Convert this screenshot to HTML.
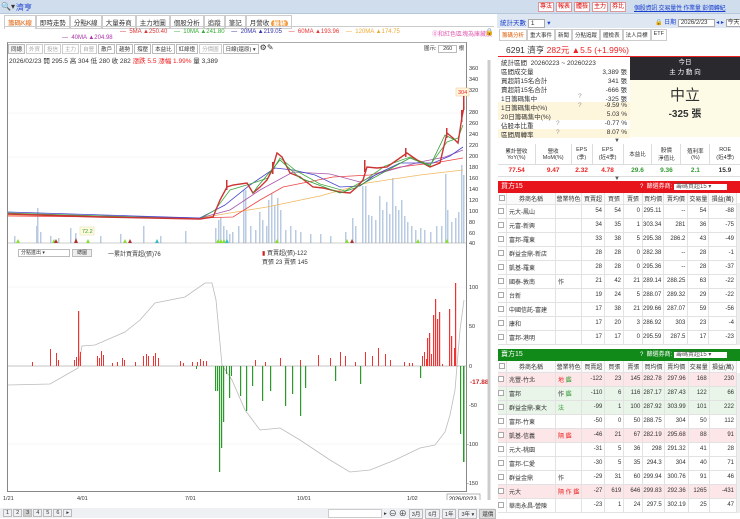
<!DOCTYPE html>
<html><head><meta charset="utf-8"><style>
*{margin:0;padding:0;box-sizing:border-box}
body{width:740px;height:518px;overflow:hidden;background:#fff;font-family:"Liberation Sans","Noto Sans CJK TC",sans-serif;font-size:6.5px;color:#333;position:relative}
.a{position:absolute;white-space:nowrap}
table{border-collapse:collapse}
.t td{border-right:1px solid #e2e2e2;border-bottom:1px solid #e2e2e2;height:14px;font-size:6px;text-align:right;padding-right:2px}
.t tr.h td{height:11px;text-align:center;padding:0;background:#fafafa}
.t td.n{text-align:left;padding-left:2px}
.cb{display:inline-block;width:6px;height:6px;border:1px solid #aaa;background:#fff;vertical-align:middle}
.pink td{background:#fde6e8}.grn td{background:#e8f5e8}
.rb{border:1px solid #d99;background:#fff;color:#d00;padding:0 1px;font-size:6px;line-height:8px}
.rt span{flex-shrink:0;white-space:nowrap;border:1px solid #ccc;padding:1px 2px}
</style></head><body>
<div class="a" style="left:0;top:0;width:740px;height:14px;background:#cfdded;border-bottom:1px solid #b8c8dc"></div>
<div class="a" style="left:1px;top:2px;font-size:8px">🔍▾</div>
<div class="a" style="left:16px;top:2px;font-size:8px;color:#1a3fd0">濟亨</div>
<div class="a" style="left:538px;top:2px;display:flex;gap:2px">
<span class="rb">專法</span><span class="rb">報表</span><span class="rb">體檢</span><span class="rb">主力</span><span class="rb">券比</span></div>
<div class="a" style="left:634px;top:3px;color:#1a3fd0;font-size:6px;text-decoration:underline;letter-spacing:-0.2px">個股資訊 交易量性 作業量 彭價轉紀</div>
<div class="a" style="left:4px;top:15px;display:flex;font-size:6.5px">
<span style="padding:1px 3px;color:#e05a00;border:1px solid #ccc;border-bottom:none">籌碼K線</span><span style="padding:1px 3px;border:1px solid #ccc">即時走勢</span><span style="padding:1px 3px;border:1px solid #ccc">分點K線</span><span style="padding:1px 3px;border:1px solid #ccc">大量券商</span><span style="padding:1px 3px;border:1px solid #ccc">主力地圖</span><span style="padding:1px 3px;border:1px solid #ccc">個股分析</span><span style="padding:1px 3px;border:1px solid #ccc">追蹤</span><span style="padding:1px 3px;border:1px solid #ccc">筆記</span><span style="padding:1px 3px;border:1px solid #ccc">月營收 <b style="background:#f39a3a;color:#fff;border-radius:4px;padding:0 2px">最新</b></span></div>
<div class="a" style="left:4px;top:26px;width:490px;border-top:1px solid #ccc"></div>
<div class="a" style="left:120px;top:29px;font-size:6px"><span style="color:#d33">— &nbsp;5MA ▲250.40</span>&nbsp;&nbsp;&nbsp;&nbsp;<span style="color:#3a3">— &nbsp;10MA ▲241.80</span>&nbsp;&nbsp;&nbsp;&nbsp;<span style="color:#33a">— &nbsp;20MA ▲219.05</span>&nbsp;&nbsp;&nbsp;&nbsp;<span style="color:#e33">— &nbsp;60MA ▲193.96</span>&nbsp;&nbsp;&nbsp;&nbsp;<span style="color:#ea3">— &nbsp;120MA ▲174.75</span></div>
<div class="a" style="left:62px;top:35px;font-size:6px;color:#a3a">— &nbsp;40MA ▲204.98</div>
<div class="a" style="left:432px;top:29px;font-size:6px;color:#e05ab0">⓪和紅色區塊為庫藏股</div>
<div class="a" style="left:485px;top:28px;font-size:7px">🔒</div>
<div class="a" style="left:7px;top:42px;width:460px;height:450px;border:1px solid #888;border-top:1px solid #aaa"></div>
<div class="a" style="left:8px;top:44px;display:flex;gap:1px;font-size:5.5px">
<span style="border:1px solid #bbb;padding:0 2px;background:#f5f5f5">同總</span><span style="border:1px solid #ccc;padding:0 2px;color:#aaa">外資</span><span style="border:1px solid #ccc;padding:0 2px;color:#aaa">投信</span><span style="border:1px solid #ccc;padding:0 2px;color:#aaa">主力</span><span style="border:1px solid #ccc;padding:0 2px;color:#aaa">自營</span><span style="border:1px solid #bbb;padding:0 2px">散戶</span><span style="border:1px solid #bbb;padding:0 2px">趨勢</span><span style="border:1px solid #bbb;padding:0 2px">撐壓</span><span style="border:1px solid #bbb;padding:0 2px">本益比</span><span style="border:1px solid #bbb;padding:0 2px">紅綠燈</span><span style="border:1px solid #ccc;padding:0 2px;color:#aaa">分價圖</span><span style="border:1px solid #bbb;padding:0 2px;width:36px">日線(還原) ▾</span><span style="font-size:8px;line-height:7px">⚙✎</span></div>
<div class="a" style="left:424px;top:44px;font-size:5.5px">圖示: <span style="border:1px solid #bbb;padding:0 4px">260</span> 根</div>
<div class="a" style="left:9px;top:55px;font-size:6.5px">2026/02/23 開 295.5 高 304 低 280 收 282 <span style="color:#e22">漲跌 5.5 漲幅 1.99%</span> 量 3,389</div>
<svg class="a" style="left:0;top:60px" width="496" height="440" viewBox="0 60 496 440">
<g fill="#333" font-size="5.5" font-family="Liberation Sans">
<text x="469" y="70">360</text><text x="469" y="81">340</text><text x="469" y="92">320</text><text x="469" y="114">280</text><text x="469" y="125">260</text><text x="469" y="136">240</text><text x="469" y="147">220</text><text x="469" y="158">200</text><text x="469" y="169">180</text><text x="469" y="180">160</text><text x="469" y="191">140</text><text x="469" y="202">120</text><text x="469" y="213">100</text><text x="469" y="224">80</text><text x="469" y="235">60</text><text x="469" y="245">40</text>
<text x="469" y="289">100</text><text x="469" y="328">50</text><text x="469" y="368">0</text><text x="469" y="407">-50</text><text x="467" y="446">-100</text><text x="467" y="485">-150</text>
</g>
<rect x="456" y="88" width="13" height="8" fill="#fff6e0" stroke="#f0c890" stroke-width=".5"/><text x="458" y="94" font-size="5.5" fill="#e22">304</text>
<text x="470" y="384" font-size="6.5" fill="#c22" font-weight="bold">-17.88</text>
<g stroke="#eee" stroke-width=".5"><line x1="8" y1="113" x2="466" y2="113"/><line x1="8" y1="157" x2="466" y2="157"/><line x1="8" y1="287" x2="466" y2="287"/><line x1="8" y1="444" x2="466" y2="444"/></g>
<g fill="#b9cbe2">
<rect x="14" y="236" width="1.5" height="7"/><rect x="36" y="226" width="1.5" height="17"/><rect x="37" y="208" width="1.5" height="35"/><rect x="40" y="232" width="1.5" height="11"/><rect x="50" y="236" width="1.5" height="7"/><rect x="58" y="238" width="1.5" height="5"/><rect x="70" y="228" width="1.5" height="15"/><rect x="75" y="233" width="1.5" height="10"/><rect x="100" y="236" width="1.5" height="7"/><rect x="120" y="234" width="1.5" height="9"/><rect x="143" y="226" width="1.5" height="17"/><rect x="160" y="236" width="1.5" height="7"/><rect x="185" y="231" width="1.5" height="12"/>
<rect x="215" y="228" width="1.5" height="15"/><rect x="218" y="220" width="1.5" height="23"/><rect x="220" y="218" width="1.5" height="25"/><rect x="223" y="226" width="1.5" height="17"/><rect x="226" y="230" width="1.5" height="13"/><rect x="229" y="234" width="1.5" height="9"/><rect x="232" y="232" width="1.5" height="11"/><rect x="238" y="226" width="1.5" height="17"/><rect x="243" y="190" width="1.5" height="53"/><rect x="245" y="190" width="1.5" height="53"/><rect x="250" y="226" width="1.5" height="17"/><rect x="255" y="230" width="1.5" height="13"/><rect x="259" y="212" width="1.5" height="31"/><rect x="262" y="220" width="1.5" height="23"/><rect x="266" y="226" width="1.5" height="17"/><rect x="268" y="200" width="1.5" height="43"/><rect x="271" y="193" width="1.5" height="50"/><rect x="274" y="205" width="1.5" height="38"/><rect x="277" y="198" width="1.5" height="45"/><rect x="280" y="210" width="1.5" height="33"/><rect x="285" y="230" width="1.5" height="13"/><rect x="290" y="226" width="1.5" height="17"/><rect x="295" y="230" width="1.5" height="13"/><rect x="300" y="232" width="1.5" height="11"/><rect x="310" y="234" width="1.5" height="9"/><rect x="320" y="234" width="1.5" height="9"/><rect x="330" y="236" width="1.5" height="7"/><rect x="345" y="232" width="1.5" height="11"/><rect x="352" y="218" width="1.5" height="25"/><rect x="355" y="226" width="1.5" height="17"/>
<rect x="362" y="186" width="1.5" height="57"/><rect x="365" y="186" width="1.5" height="57"/><rect x="368" y="215" width="1.5" height="28"/><rect x="371" y="216" width="1.5" height="27"/><rect x="375" y="220" width="1.5" height="23"/><rect x="379" y="196" width="1.5" height="47"/><rect x="382" y="210" width="1.5" height="33"/><rect x="386" y="202" width="1.5" height="41"/><rect x="389" y="214" width="1.5" height="29"/><rect x="392" y="178" width="1.5" height="65"/><rect x="395" y="206" width="1.5" height="37"/><rect x="398" y="210" width="1.5" height="33"/><rect x="401" y="200" width="1.5" height="43"/><rect x="404" y="216" width="1.5" height="27"/><rect x="407" y="222" width="1.5" height="21"/><rect x="411" y="226" width="1.5" height="17"/><rect x="415" y="230" width="1.5" height="13"/><rect x="420" y="228" width="1.5" height="15"/><rect x="424" y="230" width="1.5" height="13"/><rect x="430" y="232" width="1.5" height="11"/><rect x="436" y="226" width="1.5" height="17"/><rect x="441" y="226" width="1.5" height="17"/><rect x="445" y="174" width="1.5" height="69"/><rect x="447" y="210" width="1.5" height="33"/><rect x="451" y="222" width="1.5" height="21"/><rect x="455" y="218" width="1.5" height="25"/><rect x="458" y="212" width="1.5" height="31"/><rect x="461" y="165" width="1.5" height="78"/><rect x="463" y="175" width="1.5" height="68"/>
</g>
<line x1="8" y1="243" x2="466" y2="243" stroke="#999" stroke-width=".5"/>
<polyline fill="none" stroke="#f0b860" stroke-width=".8" points="8,215 200,218 230,213 267,207 320,196 367,183 420,175 463,170"/>
<polyline fill="none" stroke="#e44" stroke-width=".8" points="8,216 200,218 233,217 260,200 283,187 333,177 370,175 400,167 440,162 463,158"/>
<polyline fill="none" stroke="#a5a" stroke-width=".8" points="8,214 200,218 230,210 260,190 293,172 330,174 360,182 380,173 420,162 445,157 463,150"/>
<polyline fill="none" stroke="#44c" stroke-width=".8" points="8,212 200,218 225,205 250,185 275,168 293,170 315,175 340,187 360,186 375,175 400,163 433,163 450,156 463,147"/>
<polyline fill="none" stroke="#4a4" stroke-width=".8" points="8,213 200,219 215,210 230,190 250,184 268,178 280,158 295,170 320,184 345,191 365,180 385,166 410,157 430,165 447,142 458,138 463,125"/>
<polyline fill="none" stroke="#c33" stroke-width="1.4" points="8,214 100,217 200,219 213,217 220,200 227,187 233,185 247,183 253,193 260,187 267,180 272,170 277,153 282,157 290,173 300,177 313,187 323,188 340,192 350,193 357,187 363,180 367,167 377,168 387,167 397,160 407,153 417,160 430,167 440,163 447,133 453,138 458,143 462,117 464,107"/>
<polyline fill="none" stroke="#393" stroke-width=".8" points="253,193 258,186 280,160 300,178 340,193 355,188 410,158 430,166 445,135 455,140"/>
<g fill="#c33"><rect x="226" y="180" width="1.5" height="10"/><rect x="272" y="162" width="1.5" height="12"/><rect x="364" y="160" width="1.5" height="12"/><rect x="405" y="148" width="1.5" height="9"/><rect x="446" y="128" width="1.5" height="10"/><rect x="461" y="110" width="1.5" height="12"/><rect x="463" y="96" width="1.5" height="14"/></g>
<g fill="#8d3"><path d="M16,243l2,-4 2,4z M52,243l2,-4 2,4z M86,243l2,-4 2,4z M123,243l2,-4 2,4z M216,243l2,-4 2,4z M219,243l2,-4 2,4z M222,243l2,-4 2,4z M275,243l2,-4 2,4z M345,243l2,-4 2,4z M416,243l2,-4 2,4z M445,243l2,-4 2,4z"/></g>
<g fill="#a33"><path d="M54,243l2,-4 2,4z M74,243l2,-5 2,5z M128,243l2,-4 2,4z M350,243l2,-4 2,4z"/></g>
<g fill="#3bc"><path d="M155,243l2,-4 2,4z M225,243l2,-4 2,4z"/></g>
<rect x="80" y="227" width="14" height="8" fill="#fffbe0" stroke="#dda" stroke-width=".5"/><text x="82" y="233" font-size="5.5" fill="#393">72.2</text>
<polyline fill="none" stroke="#bbb" stroke-width=".8" points="8,385 50,384 78,368 82,346 95,345 125,332 140,320 155,303 185,297 205,283 212,283 216,300 222,365 232,380 245,410 260,430 280,428 300,440 330,460 350,472 370,470 395,460 420,448 435,445 445,432 450,415 455,390 460,330 464,300"/>
<line x1="8" y1="366" x2="466" y2="366" stroke="#888" stroke-width=".5"/>
<g fill="#e33">
<rect x="32" y="362" width="1" height="4"/><rect x="50" y="349" width="1" height="17"/><rect x="56" y="353" width="1" height="13"/><rect x="58" y="360" width="1" height="6"/><rect x="74" y="360" width="1" height="6"/><rect x="76" y="357" width="1" height="9"/><rect x="78" y="311" width="1.2" height="55"/><rect x="80" y="352" width="1" height="14"/><rect x="97" y="356" width="1" height="10"/><rect x="99" y="358" width="1" height="8"/><rect x="101" y="351" width="1" height="15"/><rect x="103" y="355" width="1" height="11"/><rect x="112" y="363" width="1" height="3"/><rect x="117" y="362" width="1" height="4"/><rect x="122" y="358" width="1" height="8"/><rect x="124" y="360" width="1" height="6"/><rect x="135" y="362" width="1" height="4"/><rect x="143" y="356" width="1" height="10"/><rect x="146" y="354" width="1" height="12"/><rect x="148" y="356" width="1" height="10"/><rect x="153" y="356" width="1" height="10"/><rect x="155" y="353" width="1" height="13"/><rect x="158" y="358" width="1" height="8"/><rect x="180" y="361" width="1" height="5"/><rect x="183" y="363" width="1" height="3"/><rect x="192" y="362" width="1" height="4"/><rect x="197" y="362" width="1" height="4"/><rect x="200" y="359" width="1" height="7"/><rect x="203" y="361" width="1" height="5"/><rect x="206" y="361" width="1" height="5"/>
<rect x="255" y="360" width="1" height="6"/><rect x="265" y="362" width="1" height="4"/><rect x="280" y="358" width="1" height="8"/><rect x="300" y="360" width="1" height="6"/><rect x="318" y="355" width="1" height="11"/><rect x="330" y="358" width="1" height="8"/><rect x="340" y="352" width="1" height="14"/><rect x="345" y="356" width="1" height="10"/><rect x="355" y="362" width="1" height="4"/><rect x="365" y="352" width="1" height="14"/><rect x="372" y="356" width="1" height="10"/><rect x="378" y="348" width="1" height="18"/><rect x="385" y="354" width="1" height="12"/><rect x="390" y="360" width="1" height="6"/>
<rect x="404" y="362" width="1" height="4"/><rect x="409" y="363" width="1" height="3"/><rect x="412" y="363" width="1" height="3"/><rect x="422" y="356" width="1" height="10"/><rect x="424" y="352" width="1" height="14"/><rect x="426" y="359" width="1" height="7"/><rect x="427" y="338" width="1.2" height="28"/><rect x="429" y="333" width="1.2" height="33"/><rect x="431" y="354" width="1" height="12"/><rect x="433" y="315" width="1.2" height="51"/><rect x="435" y="299" width="1.2" height="67"/><rect x="437" y="319" width="1.2" height="47"/><rect x="439" y="312" width="1.2" height="54"/><rect x="442" y="364" width="1" height="2"/><rect x="449" y="309" width="1.2" height="57"/><rect x="451" y="336" width="1.2" height="30"/><rect x="454" y="348" width="1.2" height="18"/><rect x="455" y="283" width="1.2" height="83"/>
</g>
<g fill="#2a9a2a">
<rect x="215" y="366" width="1.2" height="25"/><rect x="217" y="366" width="1.2" height="25"/><rect x="219" y="366" width="1.2" height="106"/><rect x="221" y="366" width="1.2" height="82"/><rect x="223" y="366" width="1.2" height="56"/><rect x="226" y="366" width="1" height="8"/><rect x="229" y="366" width="1.2" height="32"/><rect x="231" y="366" width="1" height="10"/><rect x="196" y="366" width="1" height="3"/>
<rect x="240" y="366" width="1.2" height="30"/><rect x="246" y="366" width="1.2" height="45"/><rect x="252" y="366" width="1.2" height="20"/><rect x="262" y="366" width="1.2" height="35"/><rect x="270" y="366" width="1.2" height="25"/><rect x="285" y="366" width="1.2" height="40"/><rect x="292" y="366" width="1.2" height="28"/><rect x="300" y="366" width="1.2" height="50"/><rect x="305" y="366" width="1.2" height="22"/><rect x="335" y="366" width="1.2" height="15"/><rect x="360" y="366" width="1.2" height="18"/><rect x="420" y="366" width="1.2" height="12"/>
<rect x="460" y="366" width="1.2" height="68"/><rect x="463" y="366" width="1.5" height="96"/>
</g>
<g font-size="5.5" fill="#333"><text x="3" y="500">1/21</text><text x="3" y="506">2025</text><text x="77" y="500">4/01</text><text x="185" y="500">7/01</text><text x="297" y="500">10/01</text><text x="407" y="500">1/02</text><text x="407" y="506">2026</text></g>
<rect x="447" y="494" width="33" height="9" fill="#fff" stroke="#888" stroke-width=".6"/><text x="449" y="500.5" font-size="5.5">2026/02/23</text>
<line x1="489" y1="42" x2="489" y2="508" stroke="#ccc" stroke-width="3"/>
</svg>
<div class="a" style="left:18px;top:249px;width:52px;height:8px;border:1px solid #bbb;font-size:5px;line-height:6px;padding-left:2px">分點進出 ▾</div>
<div class="a" style="left:72px;top:249px;width:20px;height:8px;border:1px solid #bbb;background:#eee;font-size:5px;line-height:6px;text-align:center">總圖</div>
<div class="a" style="left:108px;top:249px;font-size:6px">一累計買賣超(張)76</div>
<div class="a" style="left:262px;top:248px;font-size:6px"><span style="color:#c22">▮</span> 買賣超(張)-122<br>買張 23 賣張 145</div>
<div class="a" style="left:0;top:508px;width:495px;height:10px;background:#eef0f3"></div>
<div class="a" style="left:3px;top:509px;display:flex;gap:1px;font-size:5.5px"><span style="border:1px solid #bbb;padding:0 2px">1</span><span style="border:1px solid #bbb;padding:0 2px">2</span><span style="border:1px solid #bbb;padding:0 2px;background:#ccc">3</span><span style="border:1px solid #bbb;padding:0 2px">4</span><span style="border:1px solid #bbb;padding:0 2px">5</span><span style="border:1px solid #bbb;padding:0 2px">6</span><span style="border:1px solid #bbb;padding:0 2px">▸</span></div>
<div class="a" style="left:328px;top:509px;width:54px;height:9px;background:#fff;border:1px solid #ccc"></div>
<div class="a" style="left:384px;top:508px;display:flex;gap:2px;font-size:5.5px;align-items:center"><span>▸</span><span style="font-size:8px">⊖</span><span style="font-size:8px">⊕</span><span style="border:1px solid #bbb;padding:0 2px">3月</span><span style="border:1px solid #bbb;padding:0 2px">6月</span><span style="border:1px solid #bbb;padding:0 2px">1年</span><span style="border:1px solid #bbb;padding:0 2px">3年 ▾</span><span style="border:1px solid #bbb;padding:0 2px;background:#ddd">還價</span></div>

<div class="a" style="left:497px;top:14px;width:243px;height:14px;background:#dfe8f2"></div>
<div class="a" style="left:500px;top:17px;font-size:6.5px;color:#1a3fd0">統計天數 <span style="border:1px solid #aaa;background:#fff;color:#333;padding:0 10px 0 2px">1</span> ▾</div>
<div class="a" style="left:655px;top:17px;font-size:6px;color:#1a3fd0">🔒 日期 <span style="border:1px solid #aaa;background:#fff;color:#333;padding:0 6px 0 2px">2026/2/23</span> ◂ ▸ <span style="border:1px solid #aaa;background:#fff;color:#333;padding:0 1px">今天</span></div>
<div class="a rt" style="left:499px;top:29px;width:240px;display:flex;font-size:5.5px"><span style="color:#e05a00">籌碼分析</span><span>重大事件</span><span>新聞</span><span>分點追蹤</span><span>體檢表</span><span>法人目標</span><span>ETF</span></div>
<div class="a" style="left:506px;top:44px;font-size:8.5px">6291 濟亨 <span style="color:#e22">282元 ▲5.5 (+1.99%)</span></div>
<div class="a" style="left:498px;top:56px;width:242px;height:1px;background:#e22"></div>
<div class="a" style="left:630px;top:57px;width:110px;height:23px;background:#2a2a2e;color:#fff;text-align:center;font-size:6.5px;line-height:10px;padding-top:1px">今日<br>主 力 動 向</div>
<div class="a" style="left:630px;top:80px;width:110px;height:57px;background:#fdfbe6;text-align:center"><div style="font-size:15px;margin-top:4px">中立</div><div style="font-size:10px;font-weight:bold">-325 張</div></div>
<div class="a" style="left:498px;top:57px;width:132px;font-size:6.5px">
<div style="height:9px;padding-left:3px">統計區間 &nbsp;20260223 ~ 20260223</div>
<div style="height:9px;padding-left:3px;position:relative">區間成交量<span style="position:absolute;right:3px">3,389 張</span></div>
<div style="height:9px;padding-left:3px;position:relative">買超前15名合計<span style="position:absolute;right:3px">341 張</span></div>
<div style="height:9px;padding-left:3px;position:relative">賣超前15名合計<span style="position:absolute;right:3px">-666 張</span></div>
<div style="height:9px;padding-left:3px;position:relative">1日籌碼集中<span style="position:absolute;left:80px;color:#999">?</span><span style="position:absolute;right:3px">-325 張</span></div>
<div style="height:9px;padding-left:3px;position:relative;background:#fdf5dc">1日籌碼集中(%)<span style="position:absolute;left:80px;color:#999">?</span><span style="position:absolute;right:3px">-9.59 %</span></div>
<div style="height:9px;padding-left:3px;position:relative;background:#fdf5dc">20日籌碼集中(%)<span style="position:absolute;right:3px">5.03 %</span></div>
<div style="height:9px;padding-left:3px;position:relative">佔股本比重<span style="position:absolute;left:58px;color:#999">?</span><span style="position:absolute;right:3px">-0.77 %</span></div>
<div style="height:9px;padding-left:3px;position:relative;background:#fdf5dc">區間周轉率<span style="position:absolute;left:58px;color:#999">?</span><span style="position:absolute;right:3px">8.07 %</span></div>
</div>
<div class="a" style="left:614px;top:138px;font-size:6px;color:#555">▼</div>
<table class="a" style="left:498px;top:144px;width:242px;font-size:5.5px;text-align:center">
<tr style="height:20px;border-bottom:1px solid #ddd"><td style="border-right:1px solid #ddd">累計營收<br>YoY(%)</td><td style="border-right:1px solid #ddd">營收<br>MoM(%)</td><td style="border-right:1px solid #ddd">EPS<br>(季)</td><td style="border-right:1px solid #ddd">EPS<br>(近4季)</td><td style="border-right:1px solid #ddd">本益比</td><td style="border-right:1px solid #ddd">股價<br>淨值比</td><td style="border-right:1px solid #ddd">殖利率<br>(%)</td><td>ROE<br>(近4季)</td></tr>
<tr style="height:12px;font-weight:bold;font-size:6.5px;border-bottom:1px solid #ddd"><td style="color:#e22">77.54</td><td style="color:#e22">9.47</td><td style="color:#e22">2.32</td><td style="color:#e22">4.78</td><td style="color:#393">29.6</td><td style="color:#393">9.36</td><td style="color:#393">2.1</td><td>15.9</td></tr></table>
<div class="a" style="left:614px;top:176px;font-size:6px;color:#555">▼</div>
<div class="a" style="left:498px;top:181px;width:242px;height:12px;background:#e8141c;color:#fff;font-size:7px;line-height:12px;padding-left:3px">買方15<span style="position:absolute;left:142px;font-size:6px">? &nbsp;篩選券商: <span style="background:#fff;color:#555;padding:0 16px 0 2px">籌碼買超15 ▾</span></span></div>
<table class="a t" style="left:498px;top:193px;width:239px">
<tr class="h"><td style="width:8px"><span class="cb"></span></td><td style="width:49px">券商名稱</td><td style="width:26px">營業特色</td><td style="width:23px">買賣超</td><td style="width:19px">買張</td><td style="width:19px">賣張</td><td style="width:20px">買均價</td><td style="width:24px">賣均價</td><td style="width:21px">交易量</td><td>損益(萬)</td></tr>
<tr><td><span class="cb"></span></td><td class="n">元大-鳳山</td><td></td><td>54</td><td>54</td><td>0</td><td>295.11</td><td>--</td><td>54</td><td>-88</td></tr>
<tr><td><span class="cb"></span></td><td class="n">元富-新興</td><td></td><td>34</td><td>35</td><td>1</td><td>303.34</td><td>281</td><td>36</td><td>-75</td></tr>
<tr><td><span class="cb"></span></td><td class="n">富邦-羅東</td><td></td><td>33</td><td>38</td><td>5</td><td>295.38</td><td>286.2</td><td>43</td><td>-49</td></tr>
<tr><td><span class="cb"></span></td><td class="n">群益金鼎-新店</td><td></td><td>28</td><td>28</td><td>0</td><td>282.38</td><td>--</td><td>28</td><td>-1</td></tr>
<tr><td><span class="cb"></span></td><td class="n">凱基-羅東</td><td></td><td>28</td><td>28</td><td>0</td><td>295.36</td><td>--</td><td>28</td><td>-37</td></tr>
<tr><td><span class="cb"></span></td><td class="n">國泰-敦南</td><td class="n">作</td><td>21</td><td>42</td><td>21</td><td>289.14</td><td>288.25</td><td>63</td><td>-22</td></tr>
<tr><td><span class="cb"></span></td><td class="n">台新</td><td></td><td>19</td><td>24</td><td>5</td><td>288.07</td><td>289.32</td><td>29</td><td>-22</td></tr>
<tr><td><span class="cb"></span></td><td class="n">中國信託-富建</td><td></td><td>17</td><td>38</td><td>21</td><td>299.66</td><td>287.07</td><td>59</td><td>-56</td></tr>
<tr><td><span class="cb"></span></td><td class="n">康和</td><td></td><td>17</td><td>20</td><td>3</td><td>286.92</td><td>303</td><td>23</td><td>-4</td></tr>
<tr><td><span class="cb"></span></td><td class="n">富邦-港明</td><td></td><td>17</td><td>17</td><td>0</td><td>295.59</td><td>287.5</td><td>17</td><td>-23</td></tr>
</table>
<div class="a" style="left:498px;top:349px;width:242px;height:12px;background:#118a1a;color:#fff;font-size:7px;line-height:12px;padding-left:3px">賣方15<span style="position:absolute;left:142px;font-size:6px">? &nbsp;篩選券商: <span style="background:#fff;color:#555;padding:0 16px 0 2px">籌碼賣超15 ▾</span></span></div>
<table class="a t" style="left:498px;top:361px;width:239px">
<tr class="h"><td style="width:8px"><span class="cb"></span></td><td style="width:49px">券商名稱</td><td style="width:26px">營業特色</td><td style="width:23px">買賣超</td><td style="width:19px">買張</td><td style="width:19px">賣張</td><td style="width:20px">買均價</td><td style="width:24px">賣均價</td><td style="width:21px">交易量</td><td>損益(萬)</td></tr>
<tr class="pink"><td><span class="cb"></span></td><td class="n">兆豐-竹北</td><td class="n" style="color:#e22">地 <span style="color:#393">鑑</span></td><td>-122</td><td>23</td><td>145</td><td>282.78</td><td>297.96</td><td>168</td><td>230</td></tr>
<tr class="grn"><td><span class="cb"></span></td><td class="n">富邦</td><td class="n">作 <span style="color:#393">鑑</span></td><td>-110</td><td>6</td><td>116</td><td>287.17</td><td>287.43</td><td>122</td><td>66</td></tr>
<tr class="grn"><td><span class="cb"></span></td><td class="n">群益金鼎-東大</td><td class="n" style="color:#393">法</td><td>-99</td><td>1</td><td>100</td><td>287.92</td><td>303.99</td><td>101</td><td>222</td></tr>
<tr><td><span class="cb"></span></td><td class="n">富邦-竹東</td><td></td><td>-50</td><td>0</td><td>50</td><td>288.75</td><td>304</td><td>50</td><td>112</td></tr>
<tr class="pink"><td><span class="cb"></span></td><td class="n">凱基-信義</td><td class="n" style="color:#e22">隔 鑑</td><td>-46</td><td>21</td><td>67</td><td>282.19</td><td>295.68</td><td>88</td><td>91</td></tr>
<tr><td><span class="cb"></span></td><td class="n">元大-桃園</td><td></td><td>-31</td><td>5</td><td>36</td><td>298</td><td>291.32</td><td>41</td><td>28</td></tr>
<tr><td><span class="cb"></span></td><td class="n">富邦-仁愛</td><td></td><td>-30</td><td>5</td><td>35</td><td>294.3</td><td>304</td><td>40</td><td>71</td></tr>
<tr><td><span class="cb"></span></td><td class="n">群益金鼎</td><td class="n">作</td><td>-29</td><td>31</td><td>60</td><td>299.94</td><td>300.76</td><td>91</td><td>46</td></tr>
<tr class="pink"><td><span class="cb"></span></td><td class="n">元大</td><td class="n" style="color:#e22">隔 作 鑑</td><td>-27</td><td>619</td><td>646</td><td>299.83</td><td>292.36</td><td>1265</td><td>-431</td></tr>
<tr><td><span class="cb"></span></td><td class="n">華南永昌-營陳</td><td></td><td>-23</td><td>1</td><td>24</td><td>297.5</td><td>302.19</td><td>25</td><td>47</td></tr>
</table>
<div class="a" style="left:737px;top:203px;width:3px;height:142px;background:#eee"></div>
<div class="a" style="left:737px;top:373px;width:3px;height:140px;background:#eee"></div>
</body></html>
